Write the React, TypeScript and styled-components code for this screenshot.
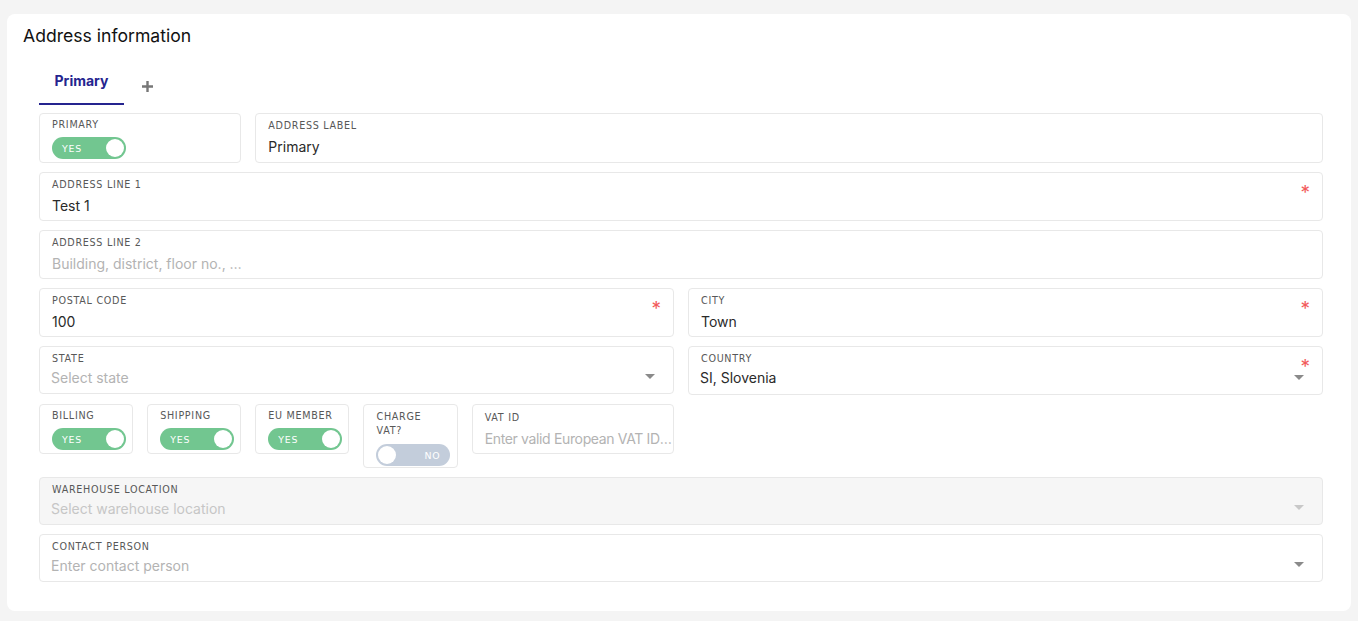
import React from "react";
import styled, { createGlobalStyle } from "styled-components";

const GlobalStyle = createGlobalStyle`
  html, body { margin: 0; padding: 0; background: #f4f4f4; }
  * { box-sizing: border-box; }
`;

const Page = styled.div`
  padding: 14px 7px 11px;
  font-family: Inter, "Noto Sans", sans-serif;
`;

const Card = styled.section`
  background: #fff;
  border-radius: 8px;
  padding: 11px 28px 29px 16px;
`;

const Title = styled.h2`
  margin: 0;
  font-size: 17.6px;
  font-weight: 400;
  line-height: 22px;
  color: #111;
`;

const Body = styled.div`
  margin-left: 16px;
`;

const Tabs = styled.div`
  display: flex;
  align-items: stretch;
  margin-top: 14px;
  height: 44px;
`;

const Tab = styled.div<{ $active?: boolean }>`
  display: flex;
  align-items: center;
  justify-content: center;
  width: 85px;
  padding-bottom: 4px;
  font-size: 14px;
  font-weight: 700;
  color: ${(p) => (p.$active ? "#25248f" : "#777")};
  border-bottom: 2px solid ${(p) => (p.$active ? "#25248f" : "transparent")};
`;

const AddTab = styled.div`
  display: flex;
  align-items: center;
  padding: 6px 0 0 17px;
  color: #777;
`;

const Grid = styled.div`
  margin-top: 8px;
  display: grid;
  grid-template-columns: repeat(12, minmax(0, 1fr));
  column-gap: 14px;
  row-gap: 9px;
  align-items: start;
`;

const Field = styled.div<{
  $span: number;
  $disabled?: boolean;
  $pad?: string;
  $stretch?: boolean;
}>`
  position: relative;
  min-width: 0;
  grid-column: span ${(p) => p.$span};
  align-self: ${(p) => (p.$stretch ? "stretch" : "start")};
  border: 1px solid #e8e8e8;
  border-radius: 4px;
  background: ${(p) => (p.$disabled ? "#f6f6f6" : "#fff")};
  padding: ${(p) => p.$pad ?? "6px 12px 4px"};
  display: flex;
  flex-direction: column;
`;

const Label = styled.div<{ $tall?: boolean }>`
  font-family: "DejaVu Sans", "Open Sans", sans-serif;
  font-size: 9.6px;
  letter-spacing: 0.7px;
  line-height: ${(p) => (p.$tall ? "14px" : "12px")};
  color: #585858;
  text-transform: uppercase;
`;

const Value = styled.div<{
  $placeholder?: boolean;
  $faint?: boolean;
  $gap?: number;
  $tight?: boolean;
}>`
  margin-top: ${(p) => p.$gap ?? 5}px;
  font-size: 14px;
  line-height: 20px;
  letter-spacing: ${(p) => (p.$tight ? "-0.35px" : "normal")};
  color: ${(p) => (p.$faint ? "#c6c6c6" : p.$placeholder ? "#b3b3b3" : "#2a2a2a")};
  white-space: nowrap;
  overflow: hidden;
  text-overflow: ellipsis;
`;

const SelectValue = styled(Value)`
  margin-left: -1px;
`;

const Required = styled.span`
  position: absolute;
  right: 12px;
  top: 11px;
  font-size: 19px;
  line-height: 18px;
  color: #f25a5a;
`;

const Caret = styled.span<{ $faint?: boolean }>`
  position: absolute;
  right: 18px;
  bottom: 14px;
  width: 0;
  height: 0;
  border-left: 5px solid transparent;
  border-right: 5px solid transparent;
  border-top: 5px solid ${(p) => (p.$faint ? "#c8c8c8" : "#8a8a8a")};
`;

const Switch = styled.div<{ $on: boolean }>`
  margin-top: 6px;
  width: 74px;
  height: 22px;
  border-radius: 11px;
  background: ${(p) => (p.$on ? "#72c690" : "#c3cddb")};
  display: flex;
  flex-direction: ${(p) => (p.$on ? "row" : "row-reverse")};
  align-items: center;
  justify-content: space-between;
  padding-left: ${(p) => (p.$on ? "10px" : "2px")};
  padding-right: ${(p) => (p.$on ? "2px" : "10px")};
`;

const SwitchText = styled.span`
  font-family: "DejaVu Sans", "Open Sans", sans-serif;
  font-size: 9.4px;
  letter-spacing: 0.8px;
  color: #fff;
`;

const Knob = styled.span`
  width: 18px;
  height: 18px;
  border-radius: 50%;
  background: #fff;
`;

function Toggle({ on }: { on: boolean }) {
  return (
    <Switch $on={on}>
      <SwitchText>{on ? "YES" : "NO"}</SwitchText>
      <Knob />
    </Switch>
  );
}

function Plus() {
  return (
    <svg width="13" height="13" viewBox="0 0 13 13">
      <path d="M6.5 1v11M1 6.5h11" stroke="#777" strokeWidth="2.4" />
    </svg>
  );
}

type TextProps = {
  span: number;
  label: string;
  value?: string;
  placeholder?: string;
  required?: boolean;
  pad?: string;
  stretch?: boolean;
  tight?: boolean;
};

function TextField({ span, label, value, placeholder, required, pad, stretch, tight }: TextProps) {
  return (
    <Field $span={span} $pad={pad} $stretch={stretch}>
      <Label>{label}</Label>
      {value ? (
        <Value>{value}</Value>
      ) : (
        <Value $placeholder $tight={tight}>
          {placeholder}
        </Value>
      )}
      {required && <Required>*</Required>}
    </Field>
  );
}

function SelectField({
  span,
  label,
  value,
  placeholder,
  required,
  disabled,
}: TextProps & { disabled?: boolean }) {
  return (
    <Field
      $span={span}
      $disabled={disabled}
      $pad={`6px 12px ${required ? 6 : 5}px`}
    >
      <Label>{label}</Label>
      {value ? (
        <SelectValue $gap={3}>{value}</SelectValue>
      ) : (
        <SelectValue $gap={3} $placeholder $faint={disabled}>
          {placeholder}
        </SelectValue>
      )}
      {required && <Required>*</Required>}
      <Caret $faint={disabled} />
    </Field>
  );
}

function ToggleField({
  span,
  label,
  on,
  tall,
}: {
  span: number;
  label: string;
  on: boolean;
  tall?: boolean;
}) {
  return (
    <Field $span={span} $pad={`5px 12px ${tall ? 1 : 3}px`}>
      <Label $tall={tall}>{label}</Label>
      <Toggle on={on} />
    </Field>
  );
}

export default function App() {
  return (
    <Page>
      <GlobalStyle />
      <Card>
        <Title>Address information</Title>
        <Body>
          <Tabs>
            <Tab $active>Primary</Tab>
            <AddTab>
              <Plus />
            </AddTab>
          </Tabs>
          <Grid>
            <ToggleField span={2} label="Primary" on />
            <TextField span={10} label="Address label" value="Primary" stretch />
            <TextField span={12} label="Address line 1" value="Test 1" required />
            <TextField span={12} label="Address line 2" placeholder="Building, district, floor no., …" />
            <TextField span={6} label="Postal code" value="100" required />
            <TextField span={6} label="City" value="Town" required />
            <SelectField span={6} label="State" placeholder="Select state" />
            <SelectField span={6} label="Country" value="SI, Slovenia" required />
            <ToggleField span={1} label="Billing" on />
            <ToggleField span={1} label="Shipping" on />
            <ToggleField span={1} label="EU member" on />
            <ToggleField span={1} label="Charge VAT?" on={false} tall />
            <TextField
              span={2}
              label="VAT ID"
              placeholder="Enter valid European VAT ID number"
              pad="7px 1px 4px 12px"
              tight
            />
            <SelectField span={12} label="Warehouse location" placeholder="Select warehouse location" disabled />
            <SelectField span={12} label="Contact person" placeholder="Enter contact person" />
          </Grid>
        </Body>
      </Card>
    </Page>
  );
}
